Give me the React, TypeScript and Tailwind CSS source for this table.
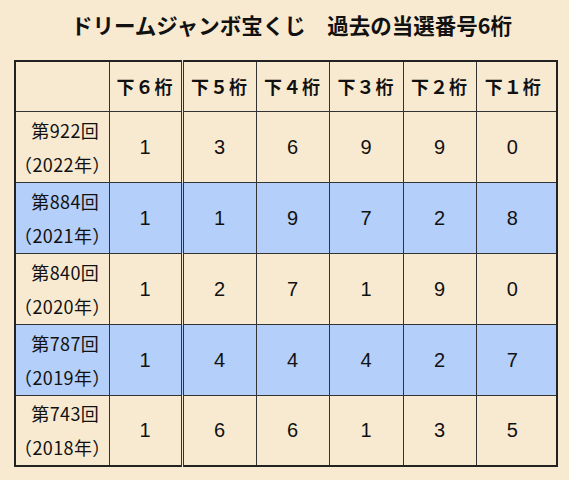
const HEADERS = ["下６桁", "下５桁", "下４桁", "下３桁", "下２桁", "下１桁"];

const ROWS = [
  { round: "第922回", year: "（2022年）", digits: [1, 3, 6, 9, 9, 0], blue: false },
  { round: "第884回", year: "（2021年）", digits: [1, 1, 9, 7, 2, 8], blue: true },
  { round: "第840回", year: "（2020年）", digits: [1, 2, 7, 1, 9, 0], blue: false },
  { round: "第787回", year: "（2019年）", digits: [1, 4, 4, 4, 2, 7], blue: true },
  { round: "第743回", year: "（2018年）", digits: [1, 6, 6, 1, 3, 5], blue: false },
];

const WIDTHS = ["w-[94px]", "w-[73px]", "w-[74px]", "w-[73px]", "w-[74px]", "w-[73px]", "w-[81px]"];

export default function App() {
  return (
    <div
      className="w-[569px] h-[480px] overflow-hidden bg-[#f8ead1] text-[#111]"
      style={{ fontFamily: '"Noto Sans CJK JP", "Noto Sans", sans-serif' }}
    >
      <h1 className="pt-[8px] pl-[71px] text-[21.5px] leading-[34px] font-bold whitespace-nowrap">
        ドリームジャンボ宝くじ　過去の当選番号6桁
      </h1>

      <table className="ml-[14px] mt-[18px] w-[542px] table-fixed border-collapse border-2 border-[#222]">
        <colgroup>
          {WIDTHS.map((w, i) => (
            <col key={i} className={w} />
          ))}
        </colgroup>
        <thead>
          <tr className="h-[50px]">
            <th className="border border-[#333]" />
            {HEADERS.map((h, i) => (
              <th
                key={h}
                className={`border border-[#333] text-[18px] font-bold tracking-[1px] ${
                  i === 0 ? "border-r-[3px] border-r-[#333] border-double" : ""
                } ${i === 5 ? "pr-[6px]" : ""}`}
              >
                {h}
              </th>
            ))}
          </tr>
        </thead>
        <tbody>
          {ROWS.map((r) => (
            <tr key={r.round} className={`h-[71px] ${r.blue ? "bg-[#b4cff9]" : ""}`}>
              <td className="border border-[#333] p-0 text-center text-[18px] tracking-[0.4px] leading-[34px] whitespace-nowrap overflow-visible">
                <div className="pl-[6px]">{r.round}</div>
                <div className="-ml-[2px]">{r.year}</div>
              </td>
              {r.digits.map((d, i) => (
                <td
                  key={i}
                  className={`border border-[#333] text-center text-[20px] ${
                    i === 0 ? "border-r-[3px] border-r-[#333] border-double" : ""
                  } ${i === 5 ? "pr-[8px]" : ""}`}
                  style={{ fontFamily: '"Liberation Sans", Arial, sans-serif' }}
                >
                  {d}
                </td>
              ))}
            </tr>
          ))}
        </tbody>
      </table>
    </div>
  );
}
